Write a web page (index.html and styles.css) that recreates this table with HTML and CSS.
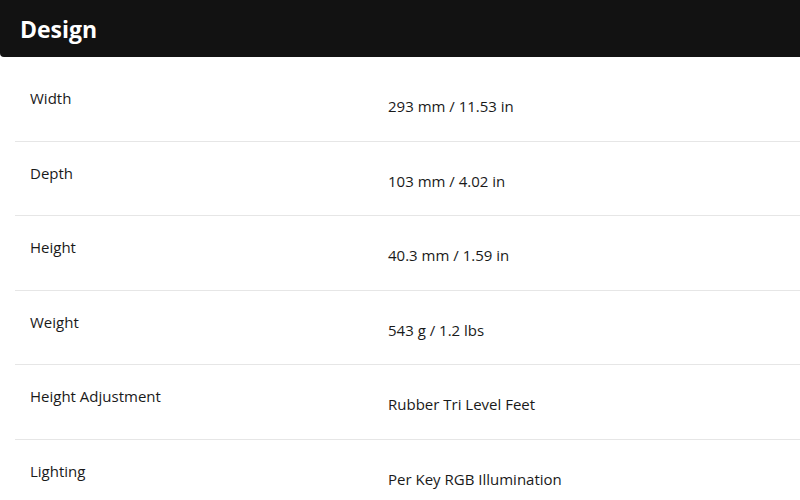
FILE: index.html
```html
<!DOCTYPE html>
<html>
<head>
<meta charset="utf-8">
<link rel="stylesheet" href="styles.css">
</head>
<body>
<div class="header"><h2 class="title">Design</h2></div>
<div class="specs">
  <div class="row"><div class="label">Width</div><div class="value">293 mm / 11.53 in</div></div>
  <div class="row"><div class="label">Depth</div><div class="value">103 mm / 4.02 in</div></div>
  <div class="row"><div class="label">Height</div><div class="value">40.3 mm / 1.59 in</div></div>
  <div class="row"><div class="label">Weight</div><div class="value">543 g / 1.2 lbs</div></div>
  <div class="row"><div class="label">Height Adjustment</div><div class="value">Rubber Tri Level Feet</div></div>
  <div class="row"><div class="label">Lighting</div><div class="value">Per Key RGB Illumination</div></div>
</div>
</body>
</html>
```
FILE: styles.css
```css
html, body { margin: 0; padding: 0; background: #fff; }
body { font-family: "Open Sans", "Noto Sans", sans-serif; color: #1a1a1a; overflow: hidden; }
.header {
  background: #121212;
  height: 57px;
  border-bottom-left-radius: 4px;
  display: flex;
  align-items: center;
  padding-left: 20px;
  box-sizing: border-box;
}
.title {
  margin: 0;
  color: #fff;
  font-size: 23px;
  font-weight: 700;
  line-height: 1;
  padding-top: 2px;
}
.specs { margin-left: 15px; padding-top: 10px; }
.row {
  display: grid;
  grid-template-columns: 373px 1fr;
  height: 74.6px;
  box-sizing: border-box;
  border-bottom: 1px solid #e6e6e6;
  font-size: 15px;
  line-height: 20px;
}
.label { padding: 21px 0 0 15px; }
.value { padding-top: 29px; }
```
